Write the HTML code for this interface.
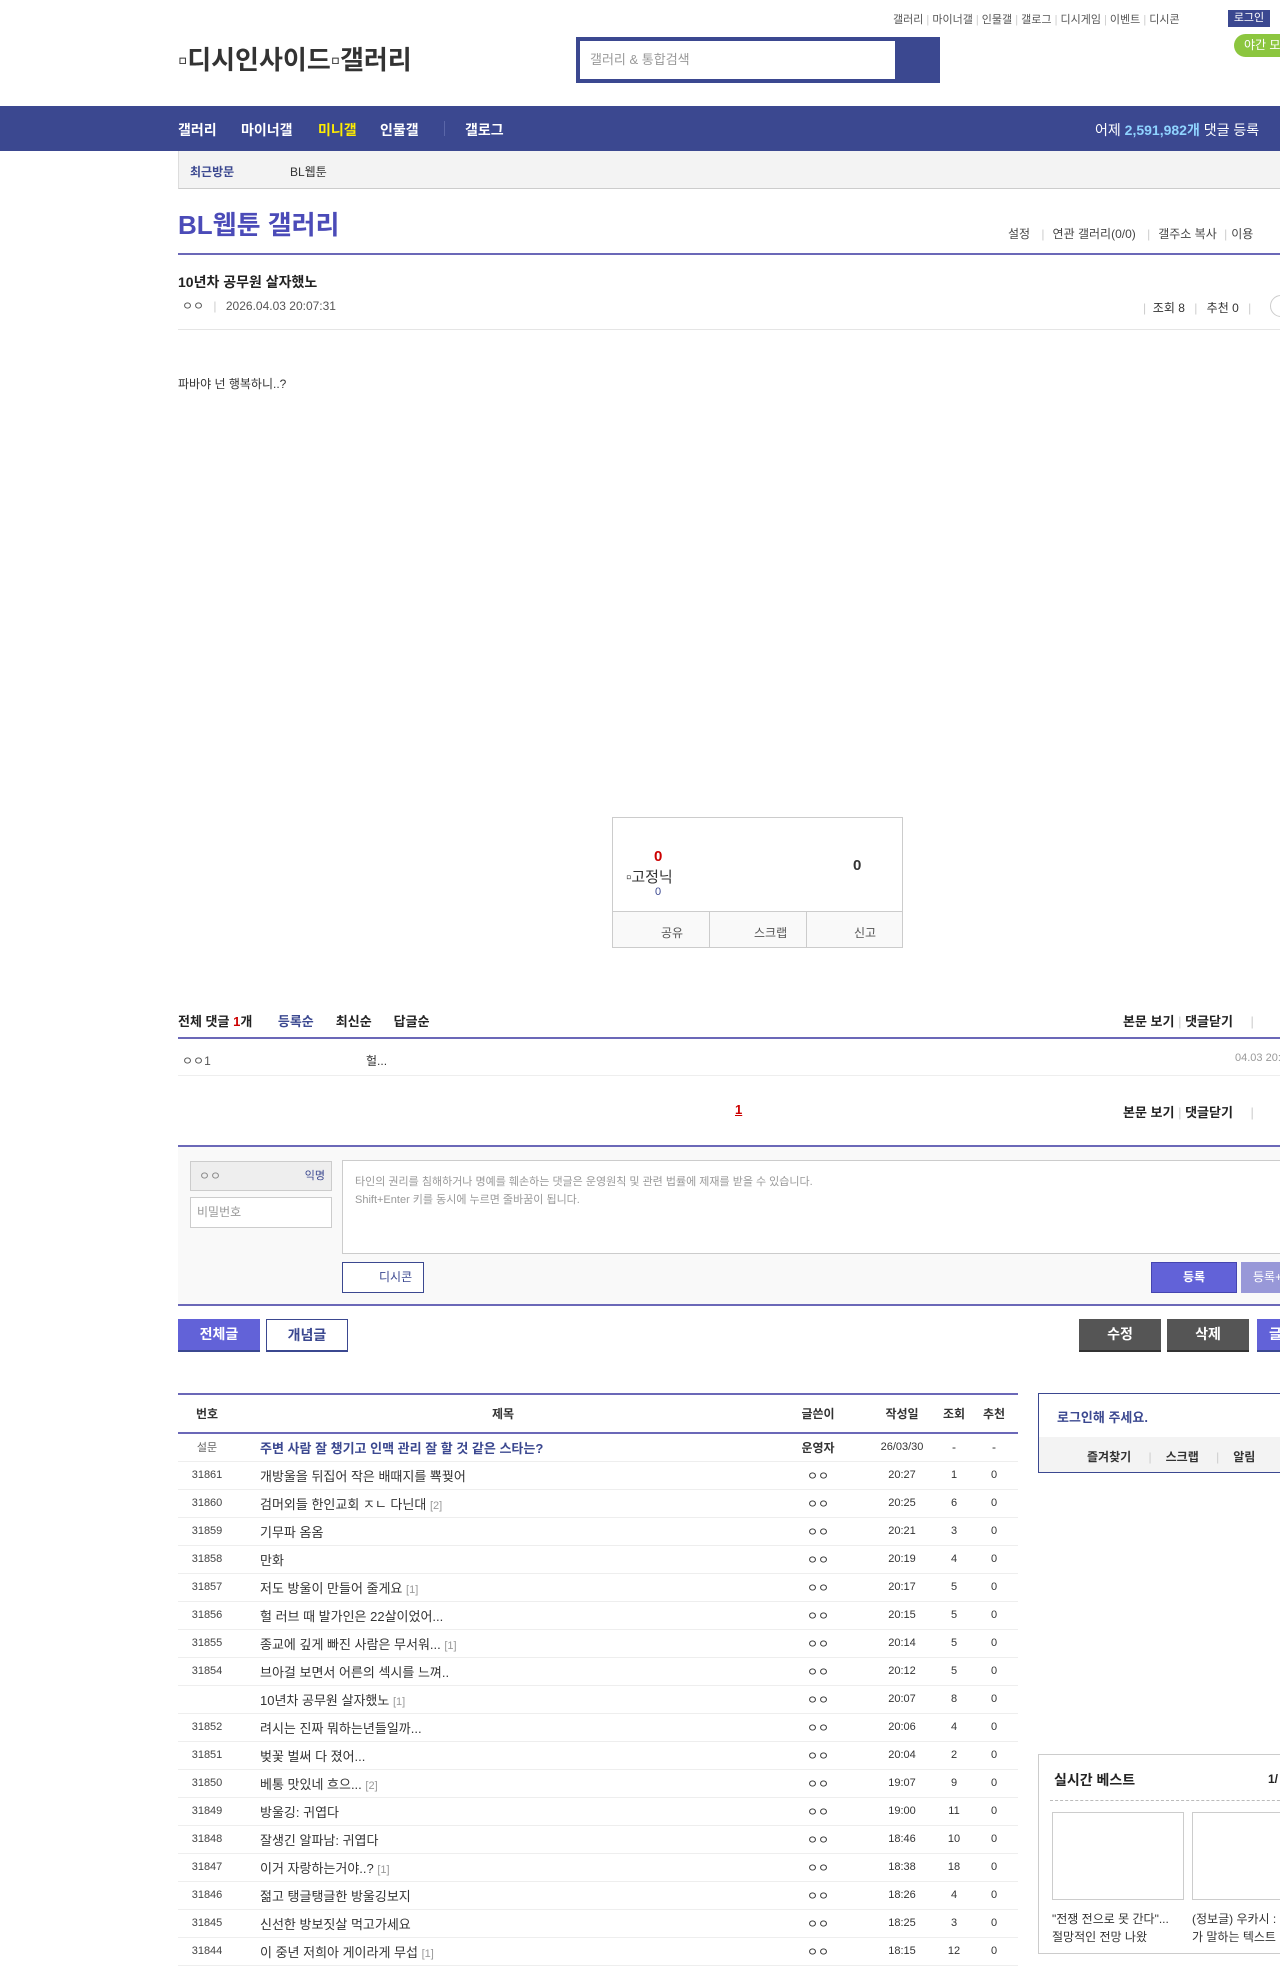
<!DOCTYPE html>
<html><head><meta charset="utf-8"><style>
*{margin:0;padding:0;box-sizing:border-box}
body{width:1280px;height:1948px;overflow:hidden;position:relative;background:#fff;font-family:"Liberation Sans","Noto Sans CJK KR",sans-serif;font-size:12px;color:#333}
.a{position:absolute;white-space:nowrap}
.b{font-weight:bold}
table{border-collapse:collapse}
</style></head><body>
<!-- top links -->
<div class="a" style="top:11px;left:893px;font-size:11px;color:#555">갤러리 <span style="color:#ccc">|</span> 마이너갤 <span style="color:#ccc">|</span> 인물갤 <span style="color:#ccc">|</span> 갤로그 <span style="color:#ccc">|</span> 디시게임 <span style="color:#ccc">|</span> 이벤트 <span style="color:#ccc">|</span> 디시콘</div>
<div class="a" style="top:10px;left:1228px;width:42px;height:17px;background:#3b4890;color:#fff;font-size:11px;text-align:center;line-height:17px">로그인</div>
<div class="a" style="top:34px;left:1234px;width:60px;height:23px;background:#8cc63f;border-radius:12px;color:#fff;font-size:12px;line-height:23px;padding-left:10px">야간 모드</div>
<div class="a b" style="top:40px;left:178px;font-size:26px;color:#333">▫디시인사이드▫갤러리</div>
<div class="a" style="top:37px;left:576px;width:364px;height:46px;background:#3b4890"></div>
<div class="a" style="top:41px;left:580px;width:315px;height:38px;background:#fff;color:#999;font-size:13px;line-height:38px;padding-left:10px">갤러리 &amp; 통합검색</div>
<!-- nav -->
<div class="a" style="top:106px;left:0;width:1280px;height:45px;background:#3b4890"></div>
<div class="a b" style="top:120px;left:178px;font-size:14px;color:#fff">갤러리</div>
<div class="a b" style="top:120px;left:241px;font-size:14px;color:#fff">마이너갤</div>
<div class="a b" style="top:120px;left:318px;font-size:14px;color:#ffed00">미니갤</div>
<div class="a b" style="top:120px;left:380px;font-size:14px;color:#fff">인물갤</div>
<div class="a" style="top:121px;left:444px;width:1px;height:15px;background:#5a66a8"></div>
<div class="a b" style="top:120px;left:465px;font-size:14px;color:#fff">갤로그</div>
<div class="a" style="top:120px;left:1095px;font-size:14px;color:#fff">어제 <b style="color:#8fd3ff">2,591,982개</b> 댓글 등록</div>
<!-- sub bar -->
<div class="a" style="top:151px;left:178px;width:1102px;height:38px;background:#f3f3f3;border-left:1px solid #ddd;border-bottom:1px solid #ccc"></div>
<div class="a b" style="top:163px;left:190px;font-size:12px;color:#3b4890">최근방문</div>
<div class="a" style="top:163px;left:290px;font-size:12px;color:#333">BL웹툰</div>
<!-- title -->
<div class="a b" style="top:205px;left:178px;font-size:26px;color:#4b4bb8">BL웹툰 갤러리</div>
<div class="a" style="top:225px;left:1008px;font-size:12px;color:#444">설정 <span style="color:#ccc;margin:0 8px">|</span>연관 갤러리(0/0) <span style="color:#ccc;margin:0 8px">|</span>갤주소 복사 <span style="color:#ccc;margin:0 4px">|</span>이용</div>
<div class="a" style="top:253px;left:178px;width:1102px;height:2px;background:#6b68b8"></div>
<div class="a b" style="top:272px;left:178px;font-size:14px;color:#222">10년차 공무원 살자했노</div>
<div class="a" style="top:297px;left:182px;font-size:12px;color:#555">ㅇㅇ <span style="color:#ccc;margin:0 6px">|</span> 2026.04.03 20:07:31</div>
<div class="a" style="top:299px;left:1143px;font-size:12px;color:#333"><span style="color:#ccc">|</span>&nbsp; 조회 8 <span style="color:#ccc;margin:0 6px">|</span> 추천 0 <span style="color:#ccc;margin:0 6px">|</span></div>
<div class="a" style="top:295px;left:1270px;width:24px;height:22px;border:1px solid #ccc;border-radius:11px"></div>
<div class="a" style="top:329px;left:178px;width:1102px;height:1px;background:#e5e5e5"></div>
<div class="a" style="top:375px;left:178px;font-size:12px;color:#333">파바야 넌 행복하니..?</div>
<!-- recommend box -->
<div class="a" style="top:817px;left:612px;width:291px;height:131px;border:1px solid #ccc"></div>
<div class="a" style="top:911px;left:612px;width:291px;height:37px;border:1px solid #ccc;background:#f9f9f9"></div>
<div class="a" style="top:911px;left:709px;width:1px;height:37px;background:#ccc"></div>
<div class="a" style="top:911px;left:806px;width:1px;height:37px;background:#ccc"></div>
<div class="a b" style="top:848px;left:654px;font-size:15px;color:#c00">0</div>
<div class="a" style="top:866px;left:626px;font-size:15px;color:#333">▫고정닉</div>
<div class="a" style="top:886px;left:655px;font-size:11px;color:#3b4890">0</div>
<div class="a b" style="top:857px;left:853px;font-size:15px;color:#333">0</div>
<div class="a" style="top:924px;left:661px;font-size:12px;color:#555">공유</div>
<div class="a" style="top:924px;left:754px;font-size:12px;color:#555">스크랩</div>
<div class="a" style="top:924px;left:854px;font-size:12px;color:#555">신고</div>
<!-- comments -->
<div class="a b" style="top:1011px;left:178px;font-size:13px;color:#222">전체 댓글 <span style="color:#c00">1</span>개 <span style="color:#3b4890;margin-left:22px">등록순</span><span style="margin-left:22px">최신순</span><span style="margin-left:22px">답글순</span></div>
<div class="a b" style="top:1011px;left:1123px;font-size:13px;color:#222">본문 보기 <span style="color:#ccc;font-weight:normal">|</span> 댓글닫기 <span style="color:#ccc;font-weight:normal;margin-left:14px">|</span></div>
<div class="a" style="top:1037px;left:178px;width:1102px;height:2px;background:#6b68b8"></div>
<div class="a" style="top:1052px;left:182px;font-size:12px;color:#555">ㅇㅇ1</div>
<div class="a" style="top:1052px;left:366px;font-size:12px;color:#333">헐...</div>
<div class="a" style="top:1052px;left:1235px;font-size:11px;color:#999">04.03 20:10</div>
<div class="a" style="top:1075px;left:178px;width:1102px;height:1px;background:#eee"></div>
<div class="a b" style="top:1102px;left:735px;font-size:13px;color:#c00;text-decoration:underline">1</div>
<div class="a b" style="top:1102px;left:1123px;font-size:13px;color:#222">본문 보기 <span style="color:#ccc;font-weight:normal">|</span> 댓글닫기 <span style="color:#ccc;font-weight:normal;margin-left:14px">|</span></div>
<!-- write -->
<div class="a" style="top:1145px;left:178px;width:1102px;height:161px;background:#f9f9f9;border-top:2px solid #6b68b8;border-bottom:2px solid #6b68b8"></div>
<div class="a" style="top:1161px;left:190px;width:142px;height:30px;background:#eee;border:1px solid #ccc;font-size:12px;color:#888;line-height:28px;padding-left:8px">ㅇㅇ<span style="float:right;margin-right:6px;color:#3b4890;font-size:11px">익명</span></div>
<div class="a" style="top:1197px;left:190px;width:142px;height:31px;background:#fff;border:1px solid #ccc;font-size:12px;color:#999;line-height:29px;padding-left:6px">비밀번호</div>
<div class="a" style="top:1160px;left:342px;width:960px;height:94px;background:#fff;border:1px solid #ccc;font-size:11px;color:#999;padding:12px 12px;line-height:18px;white-space:normal">타인의 권리를 침해하거나 명예를 훼손하는 댓글은 운영원칙 및 관련 법률에 제재를 받을 수 있습니다.<br>Shift+Enter 키를 동시에 누르면 줄바꿈이 됩니다.</div>
<div class="a" style="top:1262px;left:342px;width:82px;height:31px;background:#fff;border:1px solid #3b4890;font-size:12px;color:#3b4890;line-height:29px;padding-left:36px">디시콘</div>
<div class="a b" style="top:1262px;left:1151px;width:86px;height:31px;background:#6262d8;border:1px solid #4545b0;color:#fff;font-size:12px;text-align:center;line-height:29px">등록</div>
<div class="a" style="top:1262px;left:1241px;width:86px;height:31px;background:#9898d8;color:#fff;font-size:12px;line-height:31px;padding-left:12px">등록+추천</div>
<!-- buttons -->
<div class="a b" style="top:1319px;left:178px;width:82px;height:33px;background:#6262d8;border-bottom:2px solid #3b4890;color:#fff;font-size:14px;text-align:center;line-height:31px">전체글</div>
<div class="a b" style="top:1319px;left:266px;width:82px;height:33px;background:#fff;border:1px solid #3b4890;border-bottom:2px solid #3b4890;color:#3b4890;font-size:14px;text-align:center;line-height:30px">개념글</div>
<div class="a b" style="top:1319px;left:1079px;width:82px;height:33px;background:#555;border-bottom:2px solid #333;color:#fff;font-size:14px;text-align:center;line-height:31px">수정</div>
<div class="a b" style="top:1319px;left:1167px;width:82px;height:33px;background:#555;border-bottom:2px solid #333;color:#fff;font-size:14px;text-align:center;line-height:31px">삭제</div>
<div class="a b" style="top:1319px;left:1257px;width:82px;height:33px;background:#6262d8;border-bottom:2px solid #3b4890;color:#fff;font-size:14px;line-height:31px;padding-left:12px">글쓰기</div>
<!-- table -->
<div class="a" style="top:1393px;left:178px;width:840px">
<table style="width:840px;font-size:12px;color:#333">
<thead><tr style="height:39px;border-top:2px solid #6b68b8;border-bottom:2px solid #6b68b8;font-weight:bold;font-size:12px">
<td style="width:58px;text-align:center">번호</td><td style="text-align:center">제목</td><td style="width:96px;text-align:center">글쓴이</td><td style="width:72px;text-align:center">작성일</td><td style="width:32px;text-align:center">조회</td><td style="width:48px;text-align:center">추천</td></tr></thead>
<tbody id="tb">
<tr style="height:28px;border-bottom:1px solid #eee"><td style="text-align:center;font-size:11px;color:#666">설문</td><td style="padding-left:24px;font-weight:bold;color:#3b4890;font-size:13px">주변 사람 잘 챙기고 인맥 관리 잘 할 것 같은 스타는?</td><td style="text-align:center;font-weight:bold">운영자</td><td style="text-align:center;font-size:11px">26/03/30</td><td style="text-align:center">-</td><td style="text-align:center">-</td></tr>
</tbody></table></div>
<script>
var r=[["31861","개방울을 뒤집어 작은 배때지를 뾱꿪어","","20:27","1"],["31860","검머외들 한인교회 ㅈㄴ 다닌대","[2]","20:25","6"],["31859","기무파 옴옴","","20:21","3"],["31858","만화","","20:19","4"],["31857","저도 방울이 만들어 줄게요","[1]","20:17","5"],["31856","헐 러브 때 발가인은 22살이었어...","","20:15","5"],["31855","종교에 깊게 빠진 사람은 무서워...","[1]","20:14","5"],["31854","브아걸 보면서 어른의 섹시를 느껴..","","20:12","5"],["","10년차 공무원 살자했노","[1]","20:07","8"],["31852","려시는 진짜 뭐하는년들일까...","","20:06","4"],["31851","벚꽃 벌써 다 졌어...","","20:04","2"],["31850","베통 맛있네 흐으...","[2]","19:07","9"],["31849","방울깅: 귀엽다","","19:00","11"],["31848","잘생긴 알파남: 귀엽다","","18:46","10"],["31847","이거 자랑하는거야..?","[1]","18:38","18"],["31846","젊고 탱글탱글한 방울깅보지","","18:26","4"],["31845","신선한 방보짓살 먹고가세요","","18:25","3"],["31844","이 중년 저희아 게이라게 무섭","[1]","18:15","12"]];
var h="";r.forEach(function(x){h+='<tr style="height:28px;border-bottom:1px solid #eee"><td style="text-align:center;font-size:11px;color:#444">'+x[0]+'</td><td style="padding-left:24px;font-size:13px">'+x[1]+(x[2]?' <span style="color:#999;font-size:11px">'+x[2]+'</span>':'')+'</td><td style="text-align:center">ㅇㅇ</td><td style="text-align:center;font-size:11px">'+x[3]+'</td><td style="text-align:center;font-size:11px">'+x[4]+'</td><td style="text-align:center;font-size:11px">0</td></tr>';});
document.getElementById("tb").insertAdjacentHTML("beforeend",h);
</script>
<!-- sidebar -->
<div class="a" style="top:1393px;left:1038px;width:260px;height:80px;border:1px solid #3b4890;background:#fff"></div>
<div class="a" style="top:1437px;left:1039px;width:260px;height:35px;background:#f3f3f3"></div>
<div class="a b" style="top:1407px;left:1057px;font-size:13px;color:#3b4890">로그인해 주세요.</div>
<div class="a b" style="top:1448px;left:1087px;font-size:12px;color:#333">즐겨찾기 <span style="color:#ccc;font-weight:normal;margin:0 14px">|</span>스크랩 <span style="color:#ccc;font-weight:normal;margin:0 14px">|</span>알림</div>
<div class="a" style="top:1754px;left:1038px;width:260px;height:200px;border:1px solid #ccc"></div>
<div class="a b" style="top:1770px;left:1054px;font-size:14px;color:#222">실시간 베스트</div>
<div class="a b" style="top:1772px;left:1268px;font-size:12px;color:#222">1/</div>
<div class="a" style="top:1800px;left:1050px;width:240px;border-top:1px dashed #bbb"></div>
<div class="a" style="top:1812px;left:1052px;width:132px;height:88px;border:1px solid #ccc"></div>
<div class="a" style="top:1812px;left:1192px;width:132px;height:88px;border:1px solid #ccc"></div>
<div class="a" style="top:1910px;left:1052px;font-size:12px;color:#333;line-height:18px">"전쟁 전으로 못 간다"...<br>절망적인 전망 나왔</div>
<div class="a" style="top:1910px;left:1192px;font-size:12px;color:#333;line-height:18px">(정보글) 우카시 :<br>가 말하는 텍스트</div>
</body></html>
